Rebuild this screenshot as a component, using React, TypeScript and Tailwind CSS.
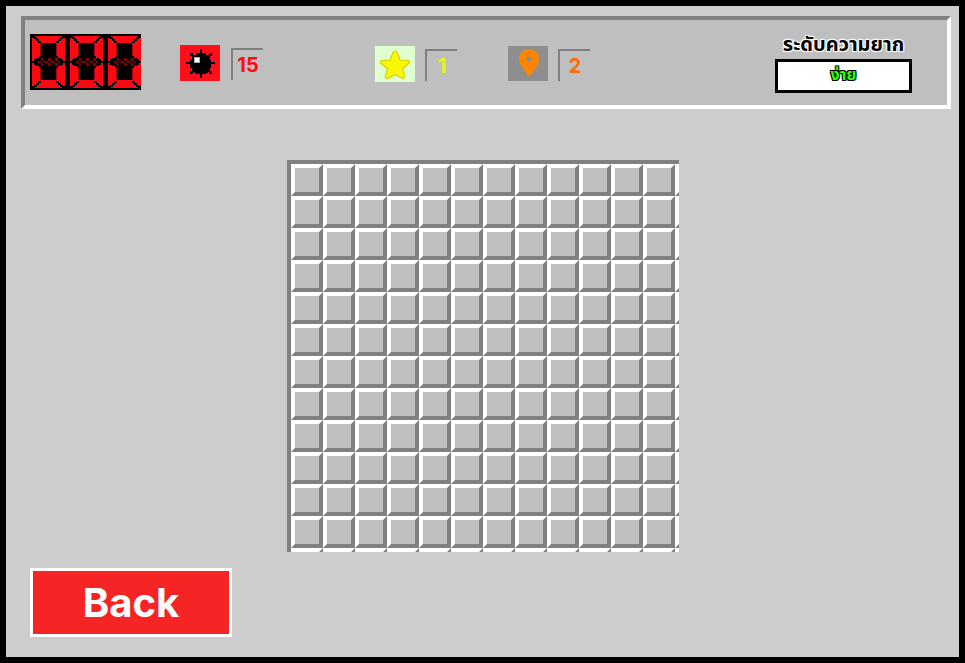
import { useState } from "react";

const SIZE = 12;

function Digit() {
  const steps = [[2, 2], [4, 3], [6, 5], [8, 7]];
  return (
    <svg className="h-14 w-[38px] shrink-0" viewBox="0 0 38 56" shapeRendering="crispEdges" aria-hidden="true">
      <path fill="#000" d="M0 0h38v56H0z" />
      <path fill="#ff0612" d="M2 2h33v52H2z" />
      <path fill="#a8000c" d="M10 10h17v36H10z" />
      <path fill="#000" d="M11 9h15v37H11zM0 27h38v2H0zM4 25h29v6H4zM6 24h25v8H6zM9 22h19v12H9z" />
      {steps.map(([x, y]) => (
        <g key={x} fill="#000">
          <rect x={x} y={y} width="3" height="2" />
          <rect x={34 - x} y={y} width="3" height="2" />
          <rect x={x} y={54 - y} width="3" height="2" />
          <rect x={34 - x} y={54 - y} width="3" height="2" />
        </g>
      ))}
      <path
        fill="#7e0008"
        d="M11 24h2v3h-2zM18 24h3v3h-3zM25 24h3v3h-3zM8 27h3v2H8zM13 27h5v2h-5zM21 27h4v2h-4zM28 27h2v2h-2zM11 29h2v3h-2zM18 29h3v3h-3zM25 29h3v3h-3z"
      />
    </svg>
  );
}

function MineIcon() {
  return (
    <svg className="h-9 w-10 bg-[#ff0d1b]" viewBox="0 0 40 36" shapeRendering="crispEdges" aria-hidden="true">
      <path d="M20 4h2v29h-2zM6 17h29v2H6zM10 8h3v3h-3zM29 8h3v3h-3zM10 26h3v3h-3zM29 26h3v3h-3zM12 10h2v2h-2zM28 10h2v2h-2zM12 25h2v2h-2zM28 25h2v2h-2z" />
      <path d="M16 8h10v2h2v2h2v3h1v8h-1v3h-2v2h-2v1H16v-1h-2v-2h-2v-3h-2v-8h2v-3h2v-2h2z" />
      <path fill="#aaa" d="M14 12h6v6h-6z" />
      <path fill="#fff" d="M15 13h4v4h-4z" />
    </svg>
  );
}

function StarIcon() {
  return (
    <svg className="h-9 w-10 bg-[#dfffcf]" viewBox="0 0 40 36" aria-hidden="true">
      <path fill="#f8f800" stroke="#d8d000" strokeWidth="1.2" strokeLinejoin="round" d="M20 5q1.5 0 2.3 2l2.8 7 8 .7q2.5.6.8 2.6l-6.4 5.4 2.2 7.6q0 2.6-2.2 2L20 28.700l-7.500 3.700q-2.500.500-2.200-2l2.100-7.700-6.300-5.400q-1.700-2 .8-2.600l8-.7 2.800-7Q18.500 5 20 5z" />
    </svg>
  );
}

function PinIcon() {
  return (
    <svg className="h-[35px] w-10 bg-[#8e8e8e]" viewBox="0 0 40 35" aria-hidden="true">
      <path fill="#ff8500" fillRule="evenodd" d="M21 3C15 3 11 7.500 11 13c0 6 6 12 10 18 4-6 10-12 10-18 0-5.500-4-10-10-10zm0 7.500a2.500 2.500 0 1 1 0 5 2.500 2.500 0 0 1 0-5z" />
    </svg>
  );
}

const counter = "mt-[3px] flex size-8 items-center justify-center border-t-2 border-l-2 border-[#808080] text-xl font-bold";

export default function App() {
  const [level, setLevel] = useState("easy");
  const [pressed, setPressed] = useState<number | null>(null);

  return (
    <main className="flex min-h-screen flex-col border-6 border-black bg-[#cdcdcd] pt-[10px] pr-2 pb-5 pl-[15px] font-['Inter','Noto_Sans_Thai',sans-serif]">
      <header className="flex h-[93px] items-start justify-between border-4 border-t-[#808080] border-r-white border-b-white border-l-[#808080] bg-[#bfbfbf] pt-[14px] pr-[35px] pl-[5px]">
        <div className="flex items-start">
          <div className="flex w-[111px] overflow-hidden" role="img" aria-label="Timer">
            <Digit />
            <Digit />
            <Digit />
          </div>
          <div className="mt-[11px] ml-[39px] flex items-start gap-[11px]">
            <MineIcon />
            <output className={`${counter} text-[#ff0b0b]`}>15</output>
          </div>
          <div className="mt-3 ml-28 flex items-start gap-[10px]">
            <StarIcon />
            <output className={`${counter} text-[#eaf416]`}>1</output>
          </div>
          <div className="mt-3 ml-[51px] flex items-start gap-[10px]">
            <PinIcon />
            <output className={`${counter} text-[#ff6a0a]`}>2</output>
          </div>
        </div>
        <div className="flex w-[137px] flex-col">
          <label htmlFor="level" className="h-[25px] text-center text-xl leading-5 font-bold whitespace-nowrap [text-shadow:1px_1px_1px_#fff,-1px_-1px_1px_#fff,1px_-1px_1px_#fff,-1px_1px_1px_#fff]">
            ระดับความยาก
          </label>
          <select
            id="level"
            value={level}
            onChange={(e) => setLevel(e.target.value)}
            className="h-[34px] appearance-none border-3 border-black bg-white pb-1 text-center text-base font-bold text-[#2bff00] [text-align-last:center] [text-shadow:1px_1px_0_#000,-1px_-1px_0_#000,1px_-1px_0_#000,-1px_1px_0_#000]"
          >
            <option value="easy">ง่าย</option>
          </select>
        </div>
      </header>

      <div className="mt-[51px] mr-[7px] flex justify-center">
        <div className="grid size-[392px] grid-cols-[repeat(13,32px)] auto-rows-[32px] overflow-hidden border-t-4 border-l-4 border-[#808080]">
          {Array.from({ length: (SIZE + 1) * (SIZE + 1) }, (_, i) => {
            const col = i % (SIZE + 1);
            const row = Math.floor(i / (SIZE + 1));
            const tile = "size-8 border-4 border-t-white border-r-[#808080] border-b-[#808080] border-l-white bg-[#bfbfbf]";
            return col < SIZE && row < SIZE ? (
              <button
                key={i}
                type="button"
                aria-label={`Row ${row + 1}, column ${col + 1}`}
                aria-pressed={pressed === i}
                onClick={() => setPressed(i)}
                className={tile}
              />
            ) : (
              <div key={i} className={tile} />
            );
          })}
        </div>
      </div>

      <button type="button" className="mt-4 ml-[9px] h-[69px] w-[202px] border-3 border-white bg-[#f62424] text-[40px] leading-none font-bold text-white">
        Back
      </button>
    </main>
  );
}
